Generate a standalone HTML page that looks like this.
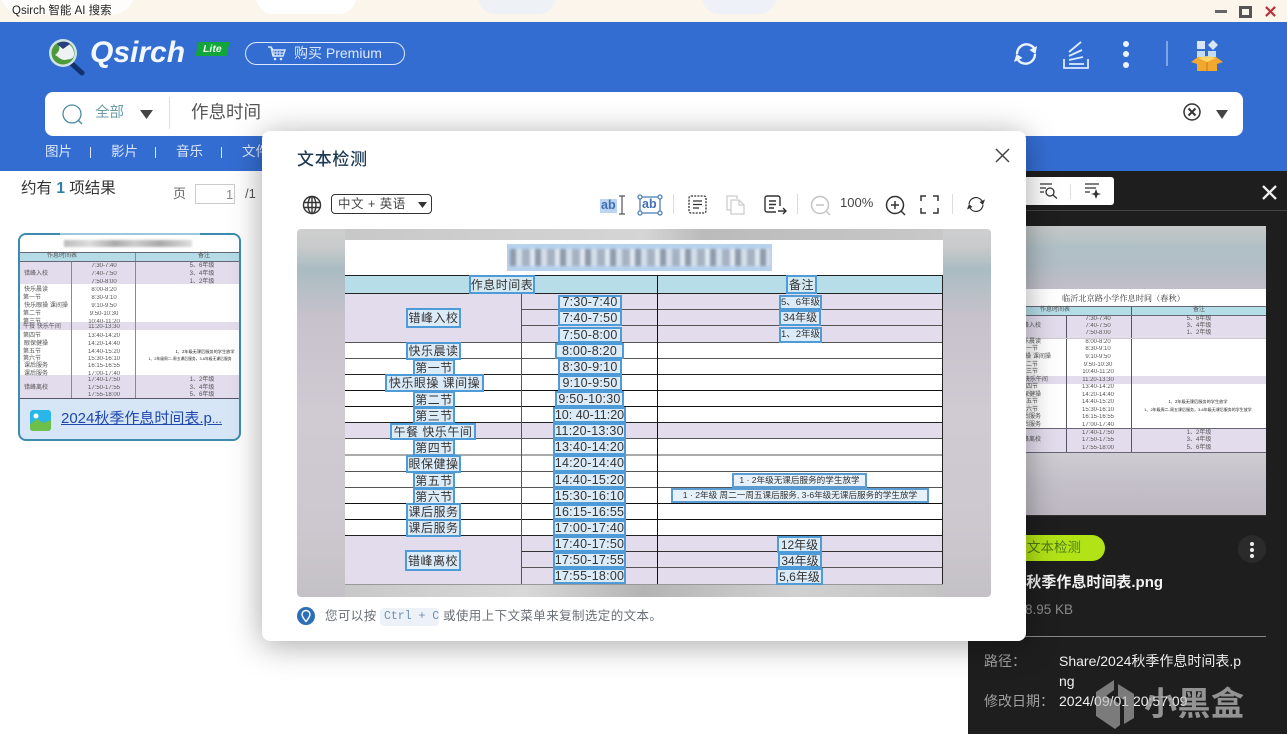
<!DOCTYPE html>
<html lang="zh">
<head>
<meta charset="utf-8">
<title>Qsirch</title>
<style>
html,body{margin:0;padding:0;width:1287px;height:749px;overflow:hidden;background:#fff;}
body{position:relative;font-family:"Liberation Sans","Noto Sans CJK SC",sans-serif;color:#333;}
.a{position:absolute;white-space:nowrap;}
.l{position:absolute;}
.b{position:absolute;box-sizing:border-box;border:2px solid #4f9bd8;background:#dcebf8;color:#333;display:flex;align-items:center;justify-content:center;white-space:nowrap;font-size:12px;letter-spacing:.5px;line-height:1;overflow:hidden;}
.t{font-size:12.5px;letter-spacing:.25px;}
.s{font-size:8.6px;letter-spacing:0;}
.r{position:absolute;white-space:nowrap;font-size:6px;line-height:8px;color:#555;filter:blur(.35px);transform:translateX(-50%);}
svg{position:absolute;overflow:visible;}
</style>
</head>
<body>

<!-- title bar -->
<div class="l" style="left:0;top:0;width:1287px;height:22px;background:#fbf5ec;"></div>
<div class="l" style="left:0;top:-20px;width:135px;height:35px;background:#fff;border-radius:0 0 24px 24px;opacity:.8;"></div>
<div class="l" style="left:256px;top:-20px;width:100px;height:34px;background:#fff;border-radius:24px;"></div>
<div class="l" style="left:478px;top:-20px;width:78px;height:34px;background:#eef2f6;border-radius:24px;"></div>
<div class="l" style="left:702px;top:-20px;width:74px;height:34px;background:#eef1f7;border-radius:24px;"></div>
<div class="a" style="left:12px;top:4px;font-size:11.5px;line-height:14px;color:#222;">Qsirch 智能 AI 搜索</div>
<div class="l" style="left:1215px;top:10px;width:12px;height:3px;background:#666;"></div>
<div class="l" style="left:1239px;top:6px;width:13px;height:12px;box-sizing:border-box;border:3px solid #555;"></div>
<svg style="left:1265px;top:6px" width="11" height="11" viewBox="0 0 12 12"><path d="M1 1L11 11M11 1L1 11" stroke="#b8333a" stroke-width="2.4"/></svg>

<!-- blue header -->
<div class="l" style="left:0;top:22px;width:1287px;height:149px;background:#346dd2;"></div>
<svg style="left:44px;top:33px" width="44" height="44" viewBox="0 0 44 44">
<path d="M28 31L38 40" stroke="#12316f" stroke-width="5" stroke-linecap="round"/>
<circle cx="19" cy="20" r="14" fill="#cfe3e6"/>
<circle cx="19" cy="20" r="11.5" fill="#4d9a3a"/>
<path d="M14 11C21 7 30 12 30 21C30 27 24 26 21 27C16 27 14 23 11 22C15 19 17 15 14 11Z" fill="#eef2f2"/>
<path d="M13 11C17 8 24 8 26 11L19 16Z" fill="#2a3f80"/>
</svg>
<div class="a" style="left:90px;top:34px;font-size:30px;line-height:38px;font-weight:bold;font-style:italic;color:#f2f7ff;">Qsirch</div>
<div class="l" style="left:197px;top:42px;width:31px;height:14px;background:#11a53a;transform:skewX(-12deg);"></div>
<div class="a" style="left:203px;top:42px;font-size:10.5px;line-height:14px;font-weight:bold;font-style:italic;color:#e8ffe8;">Lite</div>
<div class="l" style="left:245px;top:42px;width:160px;height:23px;box-sizing:border-box;border:1px solid #dbe8fb;border-radius:12px;"></div>
<svg style="left:268px;top:46px" width="18" height="15" viewBox="0 0 18 15"><path d="M0 1H3L5 4H17L15 10H5L3 1" fill="none" stroke="#dbe8fb" stroke-width="1.4"/><path d="M6 5V10M9 5V10M12 5V10M5 7H16" stroke="#dbe8fb"/><circle cx="7" cy="13" r="1.3" fill="#dbe8fb"/><circle cx="13" cy="13" r="1.3" fill="#dbe8fb"/></svg>
<div class="a" style="left:294px;top:44px;font-size:14px;line-height:19px;color:#dce8fb;">购买 Premium</div>

<svg style="left:1012px;top:40px" width="28" height="28" viewBox="0 0 28 28" fill="none" stroke="#eef4ff" stroke-width="2.3"><path d="M5 14A9.5 9.5 0 0 1 22 8"/><path d="M23 14A9.5 9.5 0 0 1 6 20"/><path d="M25 6L23.5 14L17.5 10Z" fill="#eef4ff" stroke="none"/><path d="M2 22L4.5 14L10.5 18Z" fill="#eef4ff" stroke="none"/></svg>
<svg style="left:1062px;top:40px" width="28" height="30" viewBox="0 0 28 30" fill="none" stroke="#dcecff" stroke-width="1.8"><path d="M2 19V28H26V19"/><path d="M7 24H22M7 20L21 17M7 16L20 10M7 12L19 2"/></svg>
<div class="l" style="left:1123px;top:41px;width:6px;height:6px;border-radius:50%;background:#eef4ff;"></div>
<div class="l" style="left:1123px;top:51px;width:6px;height:6px;border-radius:50%;background:#eef4ff;"></div>
<div class="l" style="left:1123px;top:62px;width:6px;height:6px;border-radius:50%;background:#eef4ff;"></div>
<div class="l" style="left:1166px;top:41px;width:2px;height:25px;background:#7fa5e6;"></div>
<svg style="left:1190px;top:39px" width="34" height="33" viewBox="0 0 34 33"><rect x="7" y="2" width="8" height="8" fill="#d8e8f8"/><path d="M23 1L28 6L23 11L18 6Z" fill="#d8e8f8"/><rect x="7" y="12" width="8" height="7" fill="#c4dcf2"/><rect x="18" y="12" width="8" height="7" fill="#c4dcf2"/><path d="M1 23L8 18H26L33 23L27 25V32H7V25Z" fill="#f2a72e"/><path d="M8 19L17 23L26 19L17 17Z" fill="#ffd76a"/><path d="M17 23V32" stroke="#c97e16"/></svg>

<!-- search -->
<div class="l" style="left:45px;top:92px;width:1198px;height:44px;background:#fff;border-radius:8px;"></div>
<svg style="left:61px;top:103px" width="24" height="24" viewBox="0 0 24 24" fill="none" stroke="#4b8da0" stroke-width="1.3"><circle cx="11" cy="11" r="9"/><path d="M17 17L21 21"/></svg>
<div class="a" style="left:95px;top:103px;font-size:14.5px;line-height:20px;color:#6b9aa8;">全部</div>
<svg style="left:140px;top:110px" width="13" height="9" viewBox="0 0 13 9"><path d="M0 0H13L6.5 9Z" fill="#444"/></svg>
<div class="l" style="left:169px;top:97px;width:1px;height:32px;background:#ddd;"></div>
<div class="a" style="left:191px;top:100px;font-size:17.5px;line-height:25px;color:#555;">作息时间</div>
<svg style="left:1183px;top:103px" width="18" height="18" viewBox="0 0 18 18" fill="none" stroke="#333" stroke-width="1.5"><circle cx="9" cy="9" r="8"/><path d="M5.5 5.5L12.5 12.5M12.5 5.5L5.5 12.5" stroke-width="2"/></svg>
<svg style="left:1216px;top:110px" width="12" height="9" viewBox="0 0 12 9"><path d="M0 0H12L6 9Z" fill="#444"/></svg>

<!-- nav -->
<div class="a" style="left:45px;top:142px;font-size:13.5px;line-height:20px;color:#dbe7fa;">图片</div>
<div class="l" style="left:90px;top:147px;width:1px;height:11px;background:#dbe7fa;"></div>
<div class="a" style="left:111px;top:142px;font-size:13.5px;line-height:20px;color:#dbe7fa;">影片</div>
<div class="l" style="left:155px;top:147px;width:1px;height:11px;background:#dbe7fa;"></div>
<div class="a" style="left:176px;top:142px;font-size:13.5px;line-height:20px;color:#dbe7fa;">音乐</div>
<div class="l" style="left:221px;top:147px;width:1px;height:11px;background:#dbe7fa;"></div>
<div class="a" style="left:242px;top:142px;font-size:13.5px;line-height:20px;color:#dbe7fa;">文件</div>

<!-- left results -->
<div class="a" style="left:21px;top:178px;font-size:15.5px;line-height:21px;color:#333;">约有 <b style="color:#2f7fb0;">1</b> 项结果</div>
<div class="a" style="left:173px;top:184px;font-size:13px;line-height:19px;color:#666;">页</div>
<div class="l" style="left:195px;top:184px;width:40px;height:20px;box-sizing:border-box;border:1px solid #ccc;"></div>
<div class="a" style="left:226px;top:186px;font-size:13px;line-height:17px;color:#888;">1</div>
<div class="a" style="left:245px;top:185px;font-size:13px;line-height:18px;color:#555;">/1</div>

<!-- card -->
<div class="l" style="left:18px;top:233px;width:223px;height:208px;box-sizing:border-box;border:2px solid #3d8cae;border-radius:8px;background:#d6e6f6;"></div>
<div class="l" style="left:60px;top:233px;width:140px;height:3px;background:#9cc8dc;"></div>
<div class="l" style="left:20px;top:235px;width:219px;height:163px;background:#fff;border-radius:6px 6px 0 0;"></div>
<div class="l" style="left:64px;top:240px;width:128px;height:7px;background:linear-gradient(90deg,#bbb,#ddd 20%,#aaa 40%,#ccc 55%,#aaa 75%,#ddd);filter:blur(1px);"></div>
<div class="l" style="left:20px;top:252px;width:219px;height:9px;background:#b5dbe6;"></div>
<div class="l" style="left:20px;top:261px;width:219px;height:23px;background:#e2dcec;"></div>
<div class="l" style="left:20px;top:322px;width:219px;height:8px;background:#e2dcec;"></div>
<div class="l" style="left:20px;top:375px;width:219px;height:23px;background:#e2dcec;"></div>
<div class="l" style="left:71px;top:261px;width:1px;height:137px;background:#889;"></div>
<div class="l" style="left:135px;top:252px;width:1px;height:146px;background:#889;"></div>
<div class="l" style="left:20px;top:252px;width:219px;height:1px;background:#667;"></div>
<div class="l" style="left:20px;top:261px;width:219px;height:1px;background:#667;"></div>
<div class="l" style="left:20px;top:398px;width:219px;height:1px;background:#556;"></div>
<div class="r" style="left:62px;top:252px;">作息时间表</div><div class="r" style="left:204px;top:252px;">备注</div>
<div class="r" style="left:104px;top:262px;">7:30-7:40</div><div class="r" style="left:202px;top:262px;">5、6年级</div>
<div class="r" style="left:104px;top:270px;">7:40-7:50</div><div class="r" style="left:202px;top:270px;">3、4年级</div>
<div class="r" style="left:104px;top:278px;">7:50-8:00</div><div class="r" style="left:202px;top:278px;">1、2年级</div>
<div class="r" style="left:36px;top:270px;">错峰入校</div>
<div class="r" style="left:104px;top:286px;">8:00-8:20</div><div class="r" style="left:36px;top:286px;">快乐晨读</div>
<div class="r" style="left:104px;top:294px;">8:30-9:10</div><div class="r" style="left:32px;top:294px;">第一节</div>
<div class="r" style="left:104px;top:302px;">9:10-9:50</div><div class="r" style="left:46px;top:302px;">快乐眼操 课间操</div>
<div class="r" style="left:104px;top:310px;">9:50-10:30</div><div class="r" style="left:32px;top:310px;">第二节</div>
<div class="r" style="left:104px;top:318px;">10:40-11:20</div><div class="r" style="left:32px;top:318px;">第三节</div>
<div class="r" style="left:104px;top:323px;">11:20-13:30</div><div class="r" style="left:42px;top:323px;">午餐 快乐午间</div>
<div class="r" style="left:104px;top:332px;">13:40-14:20</div><div class="r" style="left:32px;top:332px;">第四节</div>
<div class="r" style="left:104px;top:340px;">14:20-14:40</div><div class="r" style="left:36px;top:340px;">眼保健操</div>
<div class="r" style="left:104px;top:348px;">14:40-15:20</div><div class="r" style="left:32px;top:348px;">第五节</div><div class="r" style="left:205px;top:348px;color:#222;font-size:4.2px;">1、2年级无课后服务的学生放学</div>
<div class="r" style="left:104px;top:355px;">15:30-16:10</div><div class="r" style="left:32px;top:355px;">第六节</div><div class="r" style="left:190px;top:355px;color:#222;font-size:3.8px;">1、2年级周二-周五课后服务，3-6年级无课后服务</div>
<div class="r" style="left:104px;top:362px;">16:15-16:55</div><div class="r" style="left:36px;top:362px;">课后服务</div>
<div class="r" style="left:104px;top:370px;">17:00-17:40</div><div class="r" style="left:36px;top:370px;">课后服务</div>
<div class="r" style="left:104px;top:376px;">17:40-17:50</div><div class="r" style="left:202px;top:376px;">1、2年级</div>
<div class="r" style="left:104px;top:384px;">17:50-17:55</div><div class="r" style="left:202px;top:384px;">3、4年级</div><div class="r" style="left:36px;top:384px;">错峰离校</div>
<div class="r" style="left:104px;top:391px;">17:55-18:00</div><div class="r" style="left:202px;top:391px;">5、6年级</div>
<svg style="left:30px;top:410px" width="21" height="21" viewBox="0 0 21 21"><rect width="21" height="21" rx="3" fill="#29b6e8"/><path d="M0 14L7 9L13 13L21 10V18A3 3 0 0 1 18 21H3A3 3 0 0 1 0 18Z" fill="#6cc04a"/><circle cx="6" cy="6" r="2.5" fill="#fff"/></svg>
<div class="a" style="left:61px;top:408px;font-size:15px;line-height:22px;color:#1f47ad;text-decoration:underline;">2024秋季作息时间表.p<span style="font-size:12px;">...</span></div>

<!-- right dark panel -->
<div class="l" style="left:968px;top:171px;width:319px;height:563px;background:#1e1e1e;"></div>
<div class="l" style="left:1000px;top:177px;width:114px;height:28px;background:#fff;border-radius:3px;"></div>
<div class="l" style="left:1070px;top:184px;width:1px;height:15px;background:#ddd;"></div>
<svg style="left:1040px;top:183px" width="18" height="16" viewBox="0 0 18 16" fill="none" stroke="#333" stroke-width="1.3"><path d="M0 1H12M0 5H6M0 9H4"/><circle cx="10" cy="9" r="4"/><path d="M13 12L17 15.5"/></svg>
<svg style="left:1084px;top:183px" width="18" height="16" viewBox="0 0 18 16" fill="none" stroke="#333" stroke-width="1.3"><path d="M1 1H15M1 5H12M1 9H6"/><path d="M12 6L13.5 10L17 11L13.5 12L12 16L10.5 12L7 11L10.5 10Z" fill="#333" stroke="none"/></svg>
<svg style="left:1262px;top:185px" width="15" height="15" viewBox="0 0 15 15"><path d="M1 1L14 14M14 1L1 14" stroke="#eee" stroke-width="2.3"/></svg>
<div class="l" style="left:968px;top:210px;width:319px;height:1px;background:#444;"></div>

<!-- preview image -->
<div class="l" style="left:1026px;top:226px;width:240px;height:63px;background:linear-gradient(180deg,#c6c8c8 0,#b0c0c6 35%,#b2bec6 60%,#c2bec8 100%);"></div>
<div class="l" style="left:1026px;top:452px;width:240px;height:63px;background:linear-gradient(180deg,#cfcdd2 0,#c4c0ca 50%,#bdb8c2 100%);"></div>
<div class="l" style="left:1026px;top:289px;width:240px;height:163px;background:#fff;"></div>
<div class="a" style="left:1062px;top:291px;font-family:'Liberation Serif','Noto Serif CJK SC',serif;font-size:8.2px;line-height:15px;color:#333;">临沂北京路小学作息时间（春秋）</div>
<div class="l" style="left:1026px;top:306px;width:240px;height:9px;background:#b5dde8;"></div>
<div class="l" style="left:1026px;top:315px;width:240px;height:23px;background:#e2dcec;"></div>
<div class="l" style="left:1026px;top:376px;width:240px;height:8px;background:#e2dcec;"></div>
<div class="l" style="left:1026px;top:428px;width:240px;height:24px;background:#e2dcec;"></div>
<div class="l" style="left:1066px;top:315px;width:1px;height:137px;background:#556;"></div>
<div class="l" style="left:1131px;top:306px;width:1px;height:146px;background:#556;"></div>
<div class="l" style="left:1026px;top:306px;width:240px;height:1px;background:#667;"></div>
<div class="l" style="left:1026px;top:315px;width:240px;height:1px;background:#667;"></div>
<div class="l" style="left:1026px;top:338px;width:240px;height:1px;background:#ccc;"></div>
<div class="l" style="left:1026px;top:428px;width:240px;height:1px;background:#667;"></div>
<div class="l" style="left:1026px;top:452px;width:240px;height:1px;background:#667;"></div>
<div class="l" style="left:1026px;top:515px;width:240px;height:1px;background:#333;"></div>
<div class="r" style="left:1055px;top:306px;">作息时间表</div><div class="r" style="left:1199px;top:306px;">备注</div>
<div class="r" style="left:1098px;top:315px;">7:30-7:40</div><div class="r" style="left:1199px;top:315px;">5、6年级</div>
<div class="r" style="left:1098px;top:322px;">7:40-7:50</div><div class="r" style="left:1199px;top:322px;">3、4年级</div>
<div class="r" style="left:1098px;top:329px;">7:50-8:00</div><div class="r" style="left:1199px;top:329px;">1、2年级</div>
<div class="r" style="left:1029px;top:322px;">错峰入校</div>
<div class="r" style="left:1098px;top:338px;">8:00-8:20</div><div class="r" style="left:1029px;top:338px;">快乐晨读</div>
<div class="r" style="left:1098px;top:345px;">8:30-9:10</div><div class="r" style="left:1029px;top:345px;">第一节</div>
<div class="r" style="left:1098px;top:353px;">9:10-9:50</div><div class="r" style="left:1029px;top:353px;">快乐眼操 课间操</div>
<div class="r" style="left:1098px;top:361px;">9:50-10:30</div><div class="r" style="left:1029px;top:361px;">第二节</div>
<div class="r" style="left:1098px;top:368px;">10:40-11:20</div><div class="r" style="left:1029px;top:368px;">第三节</div>
<div class="r" style="left:1098px;top:376px;">11:20-13:30</div><div class="r" style="left:1029px;top:376px;">午餐 快乐午间</div>
<div class="r" style="left:1098px;top:383px;">13:40-14:20</div><div class="r" style="left:1029px;top:383px;">第四节</div>
<div class="r" style="left:1098px;top:391px;">14:20-14:40</div><div class="r" style="left:1029px;top:391px;">眼保健操</div>
<div class="r" style="left:1098px;top:398px;">14:40-15:20</div><div class="r" style="left:1029px;top:398px;">第五节</div><div class="r" style="left:1198px;top:398px;color:#222;font-size:4.2px;">1、2年级无课后服务的学生放学</div>
<div class="r" style="left:1098px;top:406px;">15:30-16:10</div><div class="r" style="left:1029px;top:406px;">第六节</div><div class="r" style="left:1198px;top:406px;color:#222;font-size:4px;">1、2年级周二-周五课后服务，3-6年级无课后服务的学生放学</div>
<div class="r" style="left:1098px;top:413px;">16:15-16:55</div><div class="r" style="left:1029px;top:413px;">课后服务</div>
<div class="r" style="left:1098px;top:421px;">17:00-17:40</div><div class="r" style="left:1029px;top:421px;">课后服务</div>
<div class="r" style="left:1098px;top:429px;">17:40-17:50</div><div class="r" style="left:1199px;top:429px;">1、2年级</div>
<div class="r" style="left:1098px;top:436px;">17:50-17:55</div><div class="r" style="left:1199px;top:436px;">3、4年级</div><div class="r" style="left:1029px;top:436px;">错峰离校</div>
<div class="r" style="left:1098px;top:444px;">17:55-18:00</div><div class="r" style="left:1199px;top:444px;">5、6年级</div>

<!-- panel details -->
<div class="l" style="left:1000px;top:535px;width:105px;height:26px;background:#b2e316;border-radius:13px;"></div>
<div class="a" style="left:1027px;top:538px;font-size:13.5px;line-height:19px;color:#4d7a18;">文本检测</div>
<div class="l" style="left:1238px;top:535px;width:28px;height:28px;border-radius:50%;background:#2b2b2b;"></div>
<div class="l" style="left:1250px;top:542px;width:4px;height:4px;border-radius:50%;background:#eee;"></div>
<div class="l" style="left:1250px;top:548px;width:4px;height:4px;border-radius:50%;background:#eee;"></div>
<div class="l" style="left:1250px;top:554px;width:4px;height:4px;border-radius:50%;background:#eee;"></div>
<div class="a" style="left:993px;top:572px;font-size:15px;line-height:21px;font-weight:bold;color:#f2f2f2;">2024秋季作息时间表.png</div>
<div class="a" style="left:1010px;top:601px;font-size:13.5px;line-height:18px;color:#8a8a8a;">438.95 KB</div>
<div class="l" style="left:1000px;top:636px;width:266px;height:1px;background:#888;"></div>
<div class="a" style="left:984px;top:651px;font-size:14px;line-height:20px;color:#a0a0a0;">路径：</div>
<div class="a" style="left:1059px;top:651px;font-size:14px;line-height:20px;color:#eee;">Share/2024秋季作息时间表.p</div>
<div class="a" style="left:1059px;top:671px;font-size:14px;line-height:20px;color:#eee;">ng</div>
<div class="a" style="left:984px;top:691px;font-size:14px;line-height:20px;color:#a0a0a0;">修改日期：</div>
<div class="a" style="left:1059px;top:691px;font-size:14px;line-height:20px;color:#eee;">2024/09/01 20:57:09</div>
<svg style="left:1094px;top:680px" width="42" height="50" viewBox="0 0 42 50"><path d="M20 0L2 12V36L21 49L26 45V24L12 16L20 10ZM24 4L40 14V38L30 44V20L24 16Z" fill="#b4b4b4" opacity=".62"/></svg>
<div class="a" style="left:1144px;top:684px;font-size:33px;line-height:40px;font-weight:bold;color:#c0c0c0;opacity:.72;letter-spacing:.5px;">小黑盒</div>

<!-- modal -->
<div class="l" style="left:262px;top:131px;width:764px;height:510px;background:#fff;border-radius:8px;box-shadow:0 4px 32px rgba(0,0,0,.35);"></div>
<div class="a" style="left:297px;top:148px;font-size:17px;line-height:23px;font-weight:500;color:#1c3a54;letter-spacing:.7px;">文本检测</div>
<svg style="left:995px;top:148px" width="15" height="15" viewBox="0 0 15 15"><path d="M1 1L14 14M14 1L1 14" stroke="#444" stroke-width="1.5"/></svg>
<svg style="left:302px;top:195px" width="20" height="20" viewBox="0 0 20 20" fill="none" stroke="#333" stroke-width="1.4"><circle cx="10" cy="10" r="8.5"/><ellipse cx="10" cy="10" rx="4" ry="8.5"/><path d="M1.5 7.5H18.5M1.5 12.5H18.5M10 1.5V18.5"/></svg>
<div class="l" style="left:331px;top:194px;width:101px;height:20px;box-sizing:border-box;border:1px solid #333;border-radius:4px;"></div>
<div class="a" style="left:338px;top:195px;font-size:12.5px;line-height:18px;color:#444;letter-spacing:.5px;">中文 + 英语</div>
<svg style="left:418px;top:202px" width="9" height="6" viewBox="0 0 9 6"><path d="M0 0H9L4.5 6Z" fill="#333"/></svg>

<!-- toolbar -->
<div class="l" style="left:600px;top:199px;width:17px;height:14px;background:#bcd5f0;"></div>
<div class="a" style="left:601px;top:198px;font-size:12.5px;line-height:15px;font-weight:bold;color:#3f6fb8;">ab</div>
<svg style="left:618px;top:195px" width="8" height="20" viewBox="0 0 8 20" fill="none" stroke="#555" stroke-width="1.2"><path d="M1 1H7M4 1V19M1 19H7"/></svg>
<svg style="left:637px;top:194px" width="26" height="22" viewBox="0 0 26 22" fill="none" stroke="#4f80b8" stroke-width="1.3"><rect x="3" y="3" width="20" height="16"/><circle cx="3" cy="3" r="2" fill="#fff"/><circle cx="23" cy="3" r="2" fill="#fff"/><circle cx="3" cy="19" r="2" fill="#fff"/><circle cx="23" cy="19" r="2" fill="#fff"/></svg>
<div class="a" style="left:642px;top:197px;font-size:12.5px;line-height:15px;color:#3f6fb8;font-weight:bold;">ab</div>
<div class="l" style="left:673px;top:194px;width:1px;height:20px;background:#ddd;"></div>
<svg style="left:688px;top:195px" width="19" height="19" viewBox="0 0 19 19" fill="none" stroke="#333" stroke-width="1.3"><rect x="1" y="1" width="17" height="17" rx="2" stroke-dasharray="2 1.2"/><path d="M5 6H14M5 9.5H14M5 13H11"/></svg>
<svg style="left:726px;top:195px" width="19" height="20" viewBox="0 0 19 20" fill="none" stroke="#ccc" stroke-width="1.3"><path d="M5 15H1V1H11V4"/><path d="M5 5H13L18 10V19H5Z"/><path d="M13 5V10H18"/></svg>
<svg style="left:764px;top:195px" width="23" height="20" viewBox="0 0 23 20" fill="none" stroke="#333" stroke-width="1.4"><path d="M12 17H3A2 2 0 0 1 1 15V3A2 2 0 0 1 3 1H14A2 2 0 0 1 16 3V11"/><path d="M5 6H12M5 9.5H12M5 13H10"/><path d="M14 16H22M19 13L22 16L19 19"/></svg>
<div class="l" style="left:797px;top:194px;width:1px;height:20px;background:#ddd;"></div>
<svg style="left:810px;top:195px" width="21" height="21" viewBox="0 0 21 21" fill="none" stroke="#c4c4c4" stroke-width="1.5"><circle cx="10" cy="10" r="8.5"/><path d="M6 10H14M16 16L20 20"/></svg>
<div class="a" style="left:840px;top:195px;font-size:13px;line-height:16px;color:#444;">100%</div>
<svg style="left:885px;top:195px" width="21" height="21" viewBox="0 0 21 21" fill="none" stroke="#333" stroke-width="1.5"><circle cx="10" cy="10" r="8.5"/><path d="M6 10H14M10 6V14M16 16L20 20"/></svg>
<svg style="left:920px;top:195px" width="19" height="19" viewBox="0 0 19 19" fill="none" stroke="#333" stroke-width="1.5"><path d="M1 6V1H6M13 1H18V6M18 13V18H13M6 18H1V13"/></svg>
<div class="l" style="left:952px;top:194px;width:1px;height:20px;background:#ddd;"></div>
<svg style="left:966px;top:195px" width="20" height="19" viewBox="0 0 20 19" fill="none" stroke="#333" stroke-width="1.2"><path d="M3 9A7 7 0 0 1 16 6"/><path d="M17 10A7 7 0 0 1 4 13"/><path d="M19 4.5L17 10L13.5 7Z" fill="#333" stroke="none"/><path d="M1 14.5L3 9L6.5 12Z" fill="#333" stroke="none"/></svg>

<!-- image area -->
<div class="l" style="left:297px;top:229px;width:694px;height:368px;border-radius:4px;overflow:hidden;background:linear-gradient(180deg,#cfcfcf 0,#c8cacb 5%,#a9bcc2 11%,#b8bfc7 17%,#c8c2cc 25%,#d0cad3 50%,#cdc8cf 80%,#c4c2c6 100%);"></div>
<div class="l" style="left:345px;top:229px;width:598px;height:11px;background:linear-gradient(90deg,#c8c8c8,#d5d5d5 50%,#bbb 60%,#c8c8c8);"></div>
<div class="l" style="left:345px;top:585px;width:598px;height:12px;background:linear-gradient(90deg,#c8c8c8,#d8d8d8 30%,#b4b4b4 50%,#d0d0d0 75%,#c4c4c4);"></div>
<div class="l" style="left:345px;top:240px;width:598px;height:345px;background:#fff;"></div>
<div class="l" style="left:345px;top:275px;width:598px;height:18px;background:#b7dde8;"></div>
<div class="l" style="left:345px;top:293px;width:598px;height:49px;background:#e2dcec;"></div>
<div class="l" style="left:345px;top:422px;width:598px;height:16px;background:#e2dcec;"></div>
<div class="l" style="left:345px;top:535px;width:598px;height:49px;background:#e2dcec;"></div>
<!-- grid lines -->
<div class="l" style="left:345px;top:275px;width:598px;height:1px;background:#222;"></div>
<div class="l" style="left:345px;top:293px;width:598px;height:1px;background:#222;"></div>
<div class="l" style="left:521px;top:309px;width:422px;height:1px;background:#555;"></div>
<div class="l" style="left:521px;top:325px;width:422px;height:1px;background:#555;"></div>
<div class="l" style="left:345px;top:342px;width:598px;height:1px;background:#555;"></div>
<div class="l" style="left:345px;top:358px;width:598px;height:1px;background:#555;"></div>
<div class="l" style="left:345px;top:374px;width:598px;height:1px;background:#222;"></div>
<div class="l" style="left:345px;top:390px;width:598px;height:1px;background:#111;"></div>
<div class="l" style="left:345px;top:406px;width:598px;height:1px;background:#111;"></div>
<div class="l" style="left:345px;top:422px;width:598px;height:1px;background:#222;"></div>
<div class="l" style="left:345px;top:438px;width:598px;height:1px;background:#555;"></div>
<div class="l" style="left:345px;top:454px;width:598px;height:2px;background:#aaa;"></div>
<div class="l" style="left:345px;top:471px;width:598px;height:1px;background:#555;"></div>
<div class="l" style="left:345px;top:487px;width:598px;height:1px;background:#555;"></div>
<div class="l" style="left:345px;top:503px;width:598px;height:1px;background:#111;"></div>
<div class="l" style="left:345px;top:519px;width:598px;height:1px;background:#111;"></div>
<div class="l" style="left:345px;top:535px;width:598px;height:1px;background:#222;"></div>
<div class="l" style="left:521px;top:551px;width:422px;height:1px;background:#333;"></div>
<div class="l" style="left:521px;top:567px;width:422px;height:1px;background:#555;"></div>
<div class="l" style="left:345px;top:584px;width:598px;height:1px;background:#999;"></div>
<div class="l" style="left:521px;top:293px;width:1px;height:291px;background:#555;"></div>
<div class="l" style="left:657px;top:275px;width:1px;height:309px;background:#111;"></div>
<div class="l" style="left:942px;top:275px;width:1px;height:309px;background:#222;"></div>

<!-- OCR boxes -->
<div class="l" style="left:507px;top:244px;width:265px;height:27px;background:#b8d2ee;"></div>
<div class="l" style="left:510px;top:249px;width:260px;height:17px;background:repeating-linear-gradient(90deg,#8e9aaa 0 6px,#d4deea 6px 12px,#a6b2c2 12px 20px,#e0e8f2 20px 25px);filter:blur(1.2px);"></div>
<div class="b" style="left:469px;top:275px;width:66px;height:19px;background:#d4e9f2;">作息时间表</div>
<div class="b" style="left:786px;top:275px;width:31px;height:19px;background:#d4e9f2;">备注</div>

<div class="b" style="left:406px;top:308px;width:55px;height:20px;">错峰入校</div>
<div class="b" style="left:406px;top:342px;width:55px;height:18px;">快乐晨读</div>
<div class="b" style="left:413px;top:359px;width:42px;height:17px;">第一节</div>
<div class="b" style="left:385px;top:374px;width:99px;height:18px;">快乐眼操 课间操</div>
<div class="b" style="left:413px;top:391px;width:42px;height:17px;">第二节</div>
<div class="b" style="left:413px;top:407px;width:42px;height:17px;">第三节</div>
<div class="b" style="left:390px;top:423px;width:86px;height:17px;">午餐 快乐午间</div>
<div class="b" style="left:413px;top:439px;width:42px;height:17px;">第四节</div>
<div class="b" style="left:406px;top:455px;width:55px;height:18px;">眼保健操</div>
<div class="b" style="left:413px;top:472px;width:42px;height:17px;">第五节</div>
<div class="b" style="left:413px;top:488px;width:42px;height:17px;">第六节</div>
<div class="b" style="left:406px;top:503px;width:55px;height:18px;">课后服务</div>
<div class="b" style="left:406px;top:519px;width:55px;height:18px;">课后服务</div>
<div class="b" style="left:405px;top:550px;width:56px;height:21px;">错峰离校</div>

<div class="b t" style="left:558px;top:295px;width:64px;height:15px;">7:30-7:40</div>
<div class="b t" style="left:558px;top:310px;width:64px;height:16px;">7:40-7:50</div>
<div class="b t" style="left:558px;top:327px;width:64px;height:16px;">7:50-8:00</div>
<div class="b t" style="left:555px;top:343px;width:69px;height:16px;">8:00-8:20</div>
<div class="b t" style="left:558px;top:359px;width:64px;height:16px;">8:30-9:10</div>
<div class="b t" style="left:558px;top:375px;width:64px;height:16px;">9:10-9:50</div>
<div class="b t" style="left:555px;top:391px;width:69px;height:16px;">9:50-10:30</div>
<div class="b t" style="left:553px;top:407px;width:73px;height:16px;letter-spacing:0;">10:&nbsp;40-11:20</div>
<div class="b t" style="left:553px;top:423px;width:73px;height:16px;">11:20-13:30</div>
<div class="b t" style="left:553px;top:439px;width:73px;height:16px;">13:40-14:20</div>
<div class="b t" style="left:553px;top:455px;width:73px;height:17px;">14:20-14:40</div>
<div class="b t" style="left:553px;top:472px;width:73px;height:16px;">14:40-15:20</div>
<div class="b t" style="left:553px;top:488px;width:73px;height:16px;">15:30-16:10</div>
<div class="b t" style="left:553px;top:504px;width:73px;height:16px;">16:15-16:55</div>
<div class="b t" style="left:553px;top:520px;width:73px;height:16px;">17:00-17:40</div>
<div class="b t" style="left:553px;top:536px;width:73px;height:16px;">17:40-17:50</div>
<div class="b t" style="left:553px;top:552px;width:73px;height:16px;">17:50-17:55</div>
<div class="b t" style="left:553px;top:568px;width:73px;height:16px;">17:55-18:00</div>

<div class="b" style="left:779px;top:295px;width:43px;height:15px;font-size:9.5px;letter-spacing:0;">5、6年级</div>
<div class="b" style="left:779px;top:310px;width:42px;height:16px;font-size:11px;letter-spacing:0;">34年级</div>
<div class="b" style="left:779px;top:327px;width:43px;height:16px;font-size:9.5px;letter-spacing:0;">1、2年级</div>
<div class="b s" style="left:732px;top:473px;width:135px;height:15px;background:#e6f1fb;border-color:#5b9bd0;">1 · 2年级无课后服务的学生放学</div>
<div class="b s" style="left:671px;top:488px;width:258px;height:15px;background:#e6f1fb;border-color:#5b9bd0;">1 · 2年级 周二一周五课后服务, 3-6年级无课后服务的学生放学</div>
<div class="b" style="left:777px;top:536px;width:45px;height:17px;letter-spacing:0;">12年级</div>
<div class="b" style="left:778px;top:553px;width:44px;height:15px;letter-spacing:0;">34年级</div>
<div class="b" style="left:776px;top:568px;width:47px;height:17px;letter-spacing:0;">5,6年级</div>

<!-- hint -->
<svg style="left:297px;top:607px" width="18" height="18" viewBox="0 0 18 18"><circle cx="9" cy="9" r="9" fill="#2a6fb8"/><path d="M9 3.5A4 4 0 0 1 13 7.5C13 10 10.5 12.5 9 14.5C7.5 12.5 5 10 5 7.5A4 4 0 0 1 9 3.5Z" fill="none" stroke="#fff" stroke-width="1.4"/></svg>
<div class="a" style="left:325px;top:608px;font-size:12.5px;line-height:17px;color:#6a6f76;letter-spacing:.4px;">您可以按</div>
<div class="l" style="left:380px;top:608px;width:59px;height:18px;background:#edf2f9;border-radius:4px;"></div>
<div class="a" style="left:384px;top:609px;font-family:'Liberation Mono',monospace;font-size:11.5px;line-height:16px;color:#6f8fae;">Ctrl + C</div>
<div class="a" style="left:443px;top:608px;font-size:12.5px;line-height:17px;color:#6a6f76;letter-spacing:.4px;">或使用上下文菜单来复制选定的文本。</div>

</body>
</html>
